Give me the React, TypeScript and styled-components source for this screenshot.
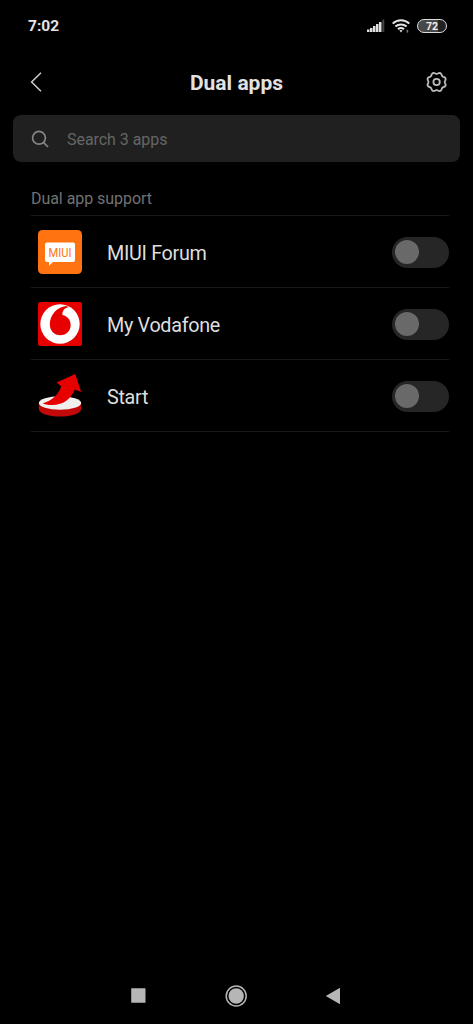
import React from "react";
import styled, { createGlobalStyle } from "styled-components";

const GlobalStyle = createGlobalStyle`
  *, *::before, *::after { box-sizing: border-box; }
  body { margin: 0; background: #000; font-family: Roboto, "Noto Sans", sans-serif; }
  svg { display: block; flex: none; }
`;

const Screen = styled.div`
  display: flex;
  flex-direction: column;
  width: 100%;
  height: 1024px;
  background: #000;
  color: #e0e0e0;
`;

const StatusBar = styled.header`
  display: flex;
  align-items: center;
  justify-content: space-between;
  height: 52px;
  padding: 0 26px 0 28px;
`;

const Clock = styled.time`
  font-size: 15.5px;
  font-weight: 700;
  line-height: 20px;
  color: #e4e4e4;
`;

const StatusIcons = styled.div`
  display: flex;
  align-items: center;
  gap: 7px;
`;

const Battery = styled.div`
  display: flex;
  align-items: center;
  justify-content: center;
  width: 30px;
  height: 14px;
  border: 1.5px solid #dcdcdc;
  border-radius: 7px;
  background: linear-gradient(90deg, #484848 0 72%, #222 72%);
  color: #f0f0f0;
  font-size: 10.5px;
  font-weight: 700;
  line-height: 11px;
`;

const TitleBar = styled.div`
  display: grid;
  grid-template-columns: 24px 1fr 24px;
  align-items: center;
  height: 63px;
  padding: 0 24px 3px;
`;

const Title = styled.h1`
  margin: 0;
  padding-top: 1px;
  text-align: center;
  font-size: 21px;
  font-weight: 700;
  line-height: 26px;
  color: #e2e2e2;
`;

const IconButton = styled.button`
  display: flex;
  align-items: center;
  justify-content: center;
  width: 24px;
  height: 24px;
  padding: 0;
  border: 0;
  background: none;
`;

const SearchBox = styled.div`
  display: flex;
  align-items: center;
  gap: 18px;
  height: 47px;
  margin: 0 13px;
  padding: 0 18px;
  border-radius: 8px;
  background: #202020;
`;

const Placeholder = styled.span`
  padding-top: 3px;
  font-size: 16px;
  line-height: 20px;
  letter-spacing: -0.05px;
  color: #666;
`;

const Section = styled.section`
  flex: 1;
  padding: 27px 24px 0 31px;
`;

const SectionTitle = styled.h2`
  margin: 0;
  height: 26px;
  font-size: 16px;
  font-weight: 400;
  line-height: 20px;
  letter-spacing: -0.05px;
  color: #727272;
`;

const AppList = styled.ul`
  margin: 0;
  padding: 0;
  list-style: none;
  border-top: 1px solid #181818;
`;

const AppRow = styled.li`
  display: flex;
  align-items: center;
  height: 72px;
  padding-left: 7px;
  border-bottom: 1px solid #181818;
`;

const AppName = styled.span`
  flex: 1;
  margin-left: 25px;
  padding-top: 5px;
  font-size: 19.8px;
  letter-spacing: -0.32px;
  line-height: 24px;
  color: #dedede;
`;

const Toggle = styled.button<{ $on?: boolean }>`
  display: flex;
  align-items: center;
  justify-content: ${(p) => (p.$on ? "flex-end" : "flex-start")};
  width: 57.5px;
  height: 31px;
  margin: 1px -0.3px 0 0;
  padding: 0 3px;
  border: 0;
  border-radius: 16px;
  background: #262626;
`;

const Knob = styled.span`
  width: 24.5px;
  height: 24.5px;
  border-radius: 50%;
  background: #696969;
`;

const NavBar = styled.nav`
  display: flex;
  align-items: center;
  justify-content: space-between;
  height: 56px;
  padding: 0 132px 0 130px;
`;

const SignalIcon = () => (
  <svg width="18" height="14" viewBox="0 0 18 14">
    <g fill="#e0e0e0">
      <rect x="0" y="10.5" width="2.5" height="2.5" />
      <rect x="3" y="9" width="2.5" height="4" />
      <rect x="6" y="7" width="2.5" height="6" />
      <rect x="9" y="5" width="2.5" height="8" />
      <rect x="12" y="3" width="2.5" height="10" />
    </g>
    <rect x="15.3" y="0.5" width="2" height="12.5" fill="#444" />
  </svg>
);

const WifiIcon = () => (
  <svg width="18" height="14" viewBox="0 0 18 14" fill="none" stroke="#e4e4e4" strokeWidth="2">
    <path d="M0.7 4.6 A12 12 0 0 1 17.3 4.6" />
    <path d="M3.4 7.6 A8.2 8.2 0 0 1 14.6 7.6" />
    <path d="M6 10.3 A4.4 4.4 0 0 1 12 10.3" />
    <path d="M7.4 11.6 Q9 10.6 10.6 11.6 L9 13.6 Z" fill="#e4e4e4" stroke="none" />
    <path d="M15.4 10.8 V13.6" stroke="#777" strokeWidth="1.6" />
  </svg>
);

const BackIcon = () => (
  <svg width="24" height="24" viewBox="0 0 24 24" fill="none" stroke="#cecece" strokeWidth="1.5">
    <path d="M17 2.8 L7.6 12 L17 21.2" />
  </svg>
);

const gearOutline = (() => {
  const points: string[] = [];
  for (let i = 0; i < 96; i++) {
    const angle = (i / 96) * Math.PI * 2;
    const radius = 8.9 - 0.75 * Math.cos(angle * 8);
    points.push(`${(11.6 + radius * Math.cos(angle)).toFixed(2)} ${(12 + radius * Math.sin(angle)).toFixed(2)}`);
  }
  return `M${points.join("L")}Z`;
})();

const GearIcon = () => (
  <svg width="24" height="24" viewBox="0 0 24 24" fill="none" stroke="#bdbdbd" strokeWidth="1.8">
    <path d={gearOutline} strokeLinejoin="round" />
    <circle cx="11.6" cy="12" r="3.2" />
  </svg>
);

const SearchIcon = () => (
  <svg width="18" height="18" viewBox="0 0 18 18" fill="none" stroke="#858585" strokeWidth="1.7">
    <circle cx="8" cy="7.8" r="6.4" />
    <path d="M12.4 12.4 L17 17" />
  </svg>
);

const MiuiIcon = () => (
  <svg width="44" height="44" viewBox="0 0 44 44">
    <rect width="44" height="44" rx="4.5" fill="#ff7410" />
    <path d="M9 12.5 H35 Q37 12.5 37 14.5 V30 Q37 32 35 32 H15 L11 35.7 V32 H9 Q7 32 7 30 V14.5 Q7 12.5 9 12.5Z" fill="#fff" />
    <text
      x="10.5"
      y="27"
      textLength="23"
      lengthAdjust="spacingAndGlyphs"
      fontFamily="Roboto, sans-serif"
      fontSize="13.5"
      fill="#ff7410"
    >
      MIUI
    </text>
  </svg>
);

const VodafoneIcon = () => (
  <svg width="44" height="44" viewBox="0 0 44 44">
    <rect width="44" height="44" rx="2.5" fill="#e60000" />
    <circle cx="22" cy="22" r="19.7" fill="#fff" />
    <path
      d="M28 4 C19 5.2 11.8 13 11.8 22.3 C11.8 28.7 16.3 33.3 22.3 33.3 C28.4 33.3 32.7 28.6 32.7 23 C32.7 17.8 29.4 14.2 24.4 13 C24.1 8.8 26.5 5.7 31 4.9Z"
      fill="#e60000"
    />
  </svg>
);

const StartIcon = () => (
  <svg width="44" height="44" viewBox="0 0 44 44">
    <path d="M0.8 28.8 V35 C1 39.3 10 42.6 22 42.6 C34 42.6 43 39.3 43.2 35 V28.8Z" fill="#c20808" />
    <ellipse cx="22" cy="29" rx="21.2" ry="6.8" fill="#f1eeee" />
    <path
      d="M4.8 29.2 C13 27 20.5 21 23.2 12.2 L18.6 8.6 L37.2 0 L43.2 18 L36.6 15.4 C33.5 24 26 31 14 31 C9.5 31 6.5 30.4 4.8 29.2Z"
      fill="#e60000"
    />
  </svg>
);

const RecentsIcon = () => (
  <svg width="16" height="24" viewBox="0 0 16 24">
    <rect x="1.2" y="4.3" width="14.3" height="14.5" rx="0.5" fill="#b6b6b6" />
  </svg>
);

const HomeIcon = () => (
  <svg width="24" height="24" viewBox="0 0 24 24">
    <circle cx="12.2" cy="12" r="10" fill="none" stroke="#b6b6b6" strokeWidth="1.5" />
    <circle cx="12.2" cy="12" r="7.7" fill="#b6b6b6" />
  </svg>
);

const TriangleIcon = () => (
  <svg width="16" height="24" viewBox="0 0 16 24">
    <path d="M0.8 12 L15 3.8 V20.2Z" fill="#b6b6b6" />
  </svg>
);

const apps = [
  { name: "MIUI Forum", Icon: MiuiIcon },
  { name: "My Vodafone", Icon: VodafoneIcon },
  { name: "Start", Icon: StartIcon },
];

export default function App() {
  return (
    <>
      <GlobalStyle />
      <Screen>
        <StatusBar>
          <Clock>7:02</Clock>
          <StatusIcons>
            <SignalIcon />
            <WifiIcon />
            <Battery>72</Battery>
          </StatusIcons>
        </StatusBar>
        <TitleBar>
          <IconButton>
            <BackIcon />
          </IconButton>
          <Title>Dual apps</Title>
          <IconButton>
            <GearIcon />
          </IconButton>
        </TitleBar>
        <SearchBox>
          <SearchIcon />
          <Placeholder>Search 3 apps</Placeholder>
        </SearchBox>
        <Section>
          <SectionTitle>Dual app support</SectionTitle>
          <AppList>
            {apps.map(({ name, Icon }) => (
              <AppRow key={name}>
                <Icon />
                <AppName>{name}</AppName>
                <Toggle>
                  <Knob />
                </Toggle>
              </AppRow>
            ))}
          </AppList>
        </Section>
        <NavBar>
          <RecentsIcon />
          <HomeIcon />
          <TriangleIcon />
        </NavBar>
      </Screen>
    </>
  );
}
